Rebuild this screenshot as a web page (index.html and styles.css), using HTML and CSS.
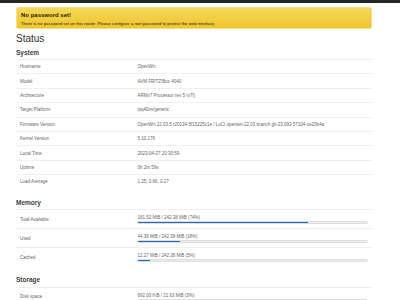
FILE: index.html
```html
<!DOCTYPE html>
<html lang="en">
<head>
    <meta charset="UTF-8">
    <meta name="viewport" content="width=device-width, initial-scale=1.0">
    <title>Status - OpenWrt - LuCI</title>
    <link rel="stylesheet" href="styles.css">
</head>
<body>
    <header class="topbar"></header>

    <div class="main">
        <div class="alert">
            <h4>No password set!</h4>
            <p>There is no password set on this router. Please configure a root password to protect the web interface.</p>
        </div>

        <h2>Status</h2>

        <div class="section">
            <h3>System</h3>
            <table class="table">
                <tr><td class="key">Hostname</td><td>OpenWrt</td></tr>
                <tr><td class="key">Model</td><td>AVM FRITZ!Box 4040</td></tr>
                <tr><td class="key">Architecture</td><td>ARMv7 Processor rev 5 (v7l)</td></tr>
                <tr><td class="key">Target Platform</td><td>ipq40xx/generic</td></tr>
                <tr><td class="key">Firmware Version</td><td>OpenWrt 22.03.5 r20134-5f15225c1e / LuCI openwrt-22.03 branch git-23.093.57104-ce20b4a</td></tr>
                <tr><td class="key">Kernel Version</td><td>5.10.176</td></tr>
                <tr><td class="key">Local Time</td><td>2023-04-27 20:30:59</td></tr>
                <tr><td class="key">Uptime</td><td>0h 2m 59s</td></tr>
                <tr><td class="key">Load Average</td><td>1.25, 0.66, 0.27</td></tr>
            </table>
        </div>

        <div class="section">
            <h3>Memory</h3>
            <table class="table bars">
                <tr>
                    <td class="key">Total Available</td>
                    <td>
                        <div class="bar-text">181.52 MiB / 242.38 MiB (74%)</div>
                        <div class="progress"><div class="fill" style="width: 74%"></div></div>
                    </td>
                </tr>
                <tr>
                    <td class="key">Used</td>
                    <td>
                        <div class="bar-text">44.36 MiB / 242.38 MiB (18%)</div>
                        <div class="progress"><div class="fill" style="width: 18%"></div></div>
                    </td>
                </tr>
                <tr>
                    <td class="key">Cached</td>
                    <td>
                        <div class="bar-text">12.27 MiB / 242.38 MiB (5%)</div>
                        <div class="progress"><div class="fill" style="width: 5%"></div></div>
                    </td>
                </tr>
            </table>
        </div>

        <div class="section">
            <h3>Storage</h3>
            <table class="table bars">
                <tr>
                    <td class="key">Disk space</td>
                    <td>
                        <div class="bar-text">692.00 KiB / 21.63 MiB (3%)</div>
                        <div class="progress"><div class="fill" style="width: 3%"></div></div>
                    </td>
                </tr>
            </table>
        </div>
    </div>
</body>
</html>
```

FILE: styles.css
```css
body {
    font-family: 'Liberation Sans', Arial, sans-serif;
    background-color: #fff;
    color: #404040;
    margin: 0;
    height: 300px;
    overflow: hidden;
}

.topbar {
    height: 3px;
    background-color: #262626;
}

.main {
    width: 356px;
    margin-left: 16px;
}

.alert {
    margin-top: 4px;
    height: 22px;
    box-sizing: border-box;
    padding: 3px 4px 0;
    background: linear-gradient(#f4d75c, #eec52c);
    border: 1px solid #f5e08c;
    border-radius: 2px;
    color: #262200;
}

.alert h4 {
    margin: 0;
    font-size: 6px;
    line-height: 8px;
    font-weight: bold;
}

.alert p {
    margin: 1px 0 0;
    font-size: 4.3px;
    line-height: 7px;
}

h2 {
    margin: 3.5px 0 3px;
    font-size: 10px;
    line-height: 12px;
    font-weight: normal;
    color: #333;
}

h3 {
    margin: 0 0 1.5px;
    font-size: 6.5px;
    line-height: 10px;
    font-weight: bold;
    color: #404040;
}

.section + .section {
    margin-top: 9px;
}

.table {
    width: 100%;
    border-collapse: collapse;
    font-size: 4.5px;
    color: #666;
}

.table td {
    border-top: 1px solid #f0f0f0;
    padding: 0 4px;
    height: 13.4px;
    vertical-align: middle;
}

.table td.key {
    width: 33%;
    box-sizing: border-box;
}

.bars td {
    height: 18px;
}

.bar-text {
    line-height: 5px;
    margin-top: 1px;
}

.progress {
    height: 3px;
    margin-top: 1px;
    background-color: #eee;
    border: 1px solid #ddd;
    box-sizing: border-box;
    border-radius: 2px;
    overflow: hidden;
}

.progress .fill {
    height: 100%;
    background-color: #1b66c9;
}
```
